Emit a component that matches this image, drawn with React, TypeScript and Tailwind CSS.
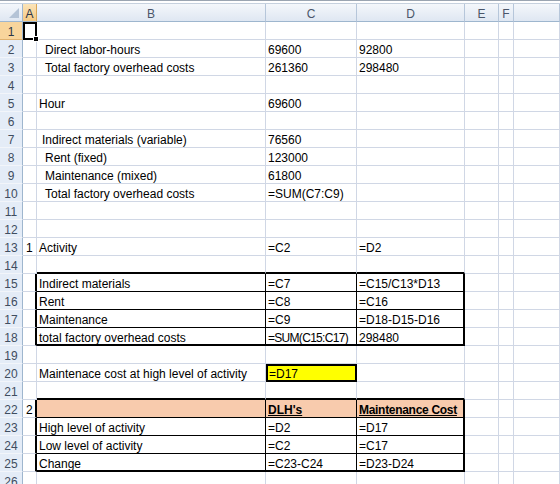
import type { ReactNode } from 'react'
import clsx from 'clsx'

type Edge = 'g' | 'k' | 'K'

// right / bottom borders: grid line, thin black, thick black
const RIGHT: Record<Edge, string> = {
  g: 'border-r border-r-[#d0d7e5]',
  k: 'border-r border-r-black',
  K: 'border-r-2 border-r-black',
}
const BOTTOM: Record<Edge, string> = {
  g: 'border-b border-b-[#d0d7e5]',
  k: 'border-b border-b-black',
  K: 'border-b-2 border-b-black',
}

type CellSpec = { t?: ReactNode; r?: Edge; b?: Edge; cls?: string }
type RowSpec = { n: number; cells?: Partial<Record<'A' | 'B' | 'C' | 'D', CellSpec>> }

const COLS = 'grid grid-cols-[23px_14px_229px_91px_108px_34px_15px_1fr]'

const hdr = (label: string, t: string, tb: string, cb: string) => ({ label, t, tb, cb })

const u = (s: string, cls = '') => <span className={clsx('font-bold underline', cls)}>{s}</span>

const tbl = (t: ReactNode, r: Edge, b: Edge, cls = ''): CellSpec => ({ t, r, b, cls })

const ROWS: RowSpec[] = [
  {
    n: 1,
    cells: {
      A: {
        r: 'K',
        b: 'K',
        cls: 'border-t-2 border-l-2 border-t-black border-l-black pl-0',
        t: (
          <span className="absolute -bottom-[4px] -right-[4px] z-10 h-[6px] w-[6px] border border-white bg-black" />
        ),
      },
    },
  },
  { n: 2, cells: { B: { t: 'Direct labor-hours', cls: 'pl-[8px]' }, C: { t: '69600' }, D: { t: '92800' } } },
  { n: 3, cells: { B: { t: 'Total factory overhead costs', cls: 'pl-[8px]' }, C: { t: '261360' }, D: { t: '298480' } } },
  { n: 4 },
  { n: 5, cells: { B: { t: 'Hour' }, C: { t: '69600' } } },
  { n: 6 },
  { n: 7, cells: { B: { t: 'Indirect materials (variable)', cls: 'pl-[5px]' }, C: { t: '76560' } } },
  { n: 8, cells: { B: { t: 'Rent (fixed)', cls: 'pl-[8px]' }, C: { t: '123000' } } },
  { n: 9, cells: { B: { t: 'Maintenance (mixed)', cls: 'pl-[8px]' }, C: { t: '61800' } } },
  { n: 10, cells: { B: { t: 'Total factory overhead costs', cls: 'pl-[8px]' }, C: { t: '=SUM(C7:C9)' } } },
  { n: 11 },
  { n: 12 },
  { n: 13, cells: { A: { t: '1', cls: 'pl-[3px]' }, B: { t: 'Activity' }, C: { t: '=C2' }, D: { t: '=D2' } } },
  { n: 14, cells: { B: { b: 'K' }, C: { b: 'K' }, D: { b: 'K' } } },
  {
    n: 15,
    cells: {
      A: { r: 'K' },
      B: tbl('Indirect materials', 'k', 'k'),
      C: tbl('=C7', 'k', 'k'),
      D: tbl('=C15/C13*D13', 'K', 'k'),
    },
  },
  { n: 16, cells: { A: { r: 'K' }, B: tbl('Rent', 'k', 'k'), C: tbl('=C8', 'k', 'k'), D: tbl('=C16', 'K', 'k') } },
  {
    n: 17,
    cells: { A: { r: 'K' }, B: tbl('Maintenance', 'k', 'k'), C: tbl('=C9', 'k', 'k'), D: tbl('=D18-D15-D16', 'K', 'k') },
  },
  {
    n: 18,
    cells: {
      A: { r: 'K' },
      B: tbl('total factory overhead costs', 'k', 'K'),
      C: tbl('=SUM(C15:C17)', 'k', 'K', 'tracking-[-0.7px]'),
      D: tbl('298480', 'K', 'K'),
    },
  },
  { n: 19 },
  {
    n: 20,
    cells: {
      B: { t: 'Maintenace cost at high level of activity' },
      C: {
        t: '=D17',
        r: 'K',
        b: 'K',
        cls: 'bg-[#ffff00] border-t-2 border-l-2 border-t-black border-l-black pl-[1px] !pt-[1px]',
      },
    },
  },
  { n: 21, cells: { B: { b: 'K' }, C: { b: 'K' }, D: { b: 'K' } } },
  {
    n: 22,
    cells: {
      A: { t: '2', r: 'K', cls: 'pl-[3px]' },
      B: tbl('', 'k', 'k', 'bg-[#f8cbad]'),
      C: tbl(u("DLH's"), 'k', 'k', 'bg-[#f8cbad]'),
      D: tbl(u('Maintenance Cost', 'tracking-[-0.3px]'), 'K', 'k', 'bg-[#f8cbad]'),
    },
  },
  {
    n: 23,
    cells: { A: { r: 'K' }, B: tbl('High level of activity', 'k', 'k'), C: tbl('=D2', 'k', 'k'), D: tbl('=D17', 'K', 'k') },
  },
  {
    n: 24,
    cells: { A: { r: 'K' }, B: tbl('Low level of activity', 'k', 'k'), C: tbl('=C2', 'k', 'k'), D: tbl('=C17', 'K', 'k') },
  },
  {
    n: 25,
    cells: { A: { r: 'K' }, B: tbl('Change', 'k', 'K'), C: tbl('=C23-C24', 'k', 'K'), D: tbl('=D23-D24', 'K', 'K') },
  },
  { n: 26 },
]

function Cell({ spec, pad }: { spec?: CellSpec; pad: string }) {
  const s = spec ?? {}
  return (
    <div
      className={clsx(
        'relative h-[18px] whitespace-nowrap pt-[3px] leading-[14px]',
        RIGHT[s.r ?? 'g'],
        BOTTOM[s.b ?? 'g'],
        s.cls && /pl-/.test(s.cls) ? '' : pad,
        s.cls,
      )}
    >
      {s.t}
    </div>
  )
}

function HeaderRow() {
  const cols = [
    hdr('A', 'text-[#2b3648]', 'bg-gradient-to-b from-[#fbe4b8] to-[#f5c983]', 'border-r-[#d9a75a]'),
    hdr('B', 'text-[#4a566a]', 'bg-gradient-to-b from-[#f4f7fb] to-[#dfe7f2]', 'border-r-[#b6c6da]'),
    hdr('C', 'text-[#4a566a]', 'bg-gradient-to-b from-[#f4f7fb] to-[#dfe7f2]', 'border-r-[#b6c6da]'),
    hdr('D', 'text-[#4a566a]', 'bg-gradient-to-b from-[#f4f7fb] to-[#dfe7f2]', 'border-r-[#b6c6da]'),
    hdr('E', 'text-[#4a566a]', 'bg-gradient-to-b from-[#f4f7fb] to-[#dfe7f2]', 'border-r-[#b6c6da]'),
    hdr('F', 'text-[#4a566a]', 'bg-gradient-to-b from-[#f4f7fb] to-[#dfe7f2]', 'border-r-[#b6c6da]'),
    hdr('', 'text-[#4a566a]', 'bg-gradient-to-b from-[#f4f7fb] to-[#dfe7f2]', 'border-r-[#b6c6da]'),
  ]
  return (
    <div className={clsx(COLS, 'h-[18px]')}>
      <div className="relative h-[18px] border-r border-b border-r-[#9eb6ce] border-b-[#9eb6ce] bg-gradient-to-b from-[#f4f7fb] to-[#dfe7f2]">
        <svg className="absolute right-[3px] bottom-[3px]" width="10" height="10" viewBox="0 0 10 10">
          <polygon points="10,0 10,10 0,10" fill="#b4c3d6" />
        </svg>
      </div>
      {cols.map((c, i) => (
        <div
          key={i}
          className={clsx(
            'flex h-[18px] items-center justify-center border-r border-b border-b-[#9eb6ce] pt-[2px] leading-[14px]',
            c.t,
            c.tb,
            c.cb,
          )}
        >
          {c.label}
        </div>
      ))}
    </div>
  )
}

export default function App() {
  return (
    <div className="h-[484px] w-[560px] overflow-hidden bg-white font-['Liberation_Sans',Arial,sans-serif] text-[12px] text-black">
      {/* strip under the formula bar */}
      <div className="h-[4px] border-t border-b border-t-[#9ba5b1] border-b-[#c6d1de] bg-white" />
      <HeaderRow />
      {ROWS.map((row) => (
        <div key={row.n} className={clsx(COLS, 'h-[18px]')}>
          <div
            className={clsx(
              'h-[18px] border-r border-b border-r-[#9eb6ce] pt-[3px] text-center leading-[14px]',
              row.n === 1
                ? 'border-b-[#e0b270] bg-[#f8d59c] text-[#2b3648]'
                : 'border-b-[#f2f5fa] bg-[#e4ecf7] text-[#3f4d5f]',
            )}
          >
            {row.n}
          </div>
          <Cell spec={row.cells?.A} pad="pl-[2px]" />
          <Cell spec={row.cells?.B} pad="pl-[2px]" />
          <Cell spec={row.cells?.C} pad="pl-[2px]" />
          <Cell spec={row.cells?.D} pad="pl-[2px]" />
          <Cell pad="" />
          <Cell pad="" />
          <Cell pad="" />
        </div>
      ))}
    </div>
  )
}
